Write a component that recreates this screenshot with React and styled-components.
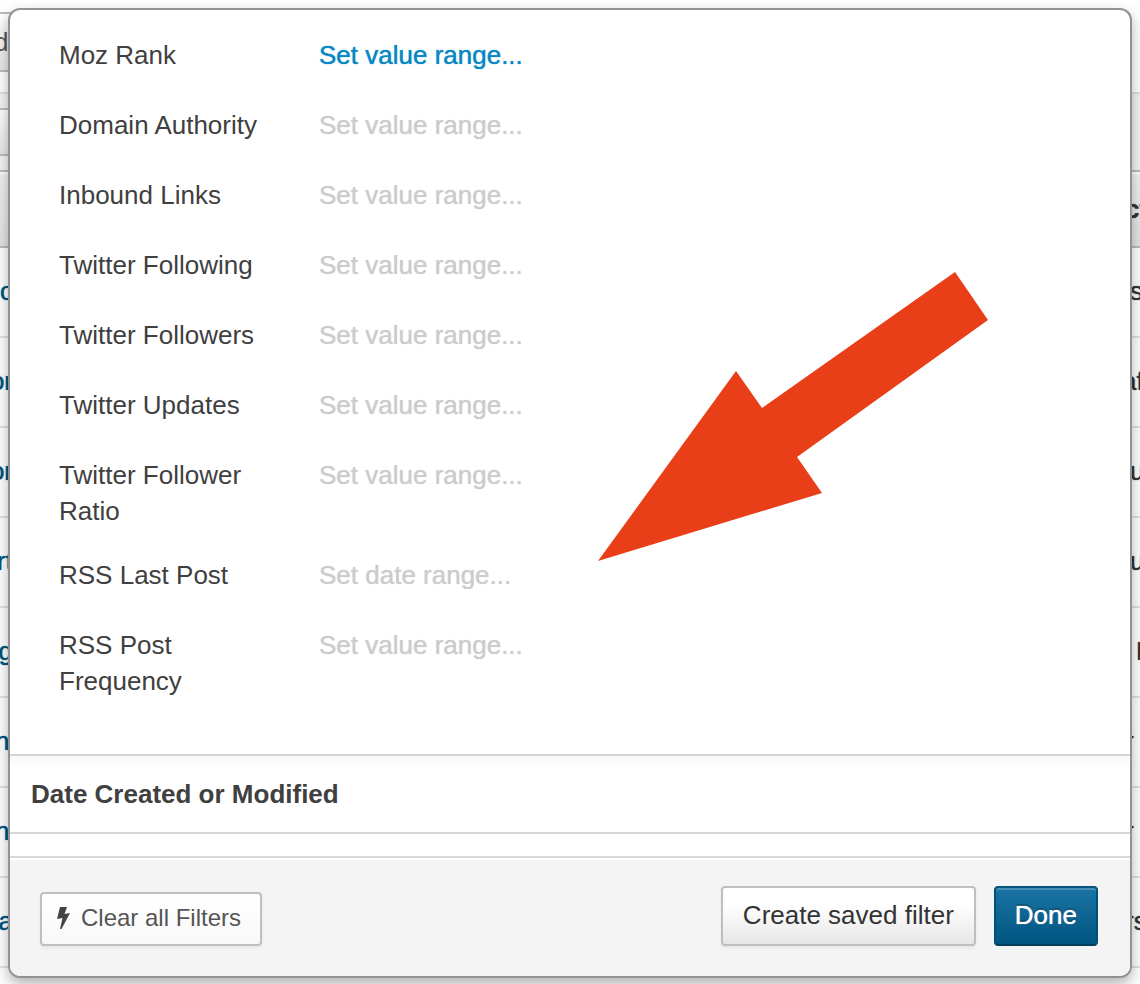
import React from "react";
import styled, { createGlobalStyle } from "styled-components";

const GlobalStyle = createGlobalStyle`
  *, *::before, *::after { box-sizing: border-box; }
  body {
    margin: 0;
    background: #fff;
    color: #404040;
    font: 26px/36px "Liberation Sans", Arial, sans-serif;
  }
`;

const Screen = styled.main`
  position: relative;
  display: flow-root;
  overflow: hidden;
`;

/* The contact list that stays visible around the dialog */
const Backdrop = styled.div`
  position: absolute;
  inset: 0;
  overflow: hidden;
`;

const TopBar = styled.div`
  height: 94px;
  padding-top: 12px;
  border-bottom: 2px solid #e0e0e0;
`;

const SubBar = styled.div`
  height: 76px;
  padding-top: 14px;
  background: #f3f3f3;
`;

const BarButton = styled.button`
  display: flex;
  align-items: center;
  justify-content: flex-end;
  width: 23px;
  height: ${(p) => (p.$tall ? 60 : 48)}px;
  padding: 0;
  border: solid #bbb;
  border-width: 2px 0;
  background: linear-gradient(#fff, #e6e6e6);
  color: #555;
  font: inherit;
`;

const ListTable = styled.table`
  width: 100%;
  table-layout: fixed;
  border-collapse: separate;
  border-spacing: 0;
`;

const HeadCell = styled.th`
  height: 78px;
  width: ${(p) => (p.$edge ? "18px" : "auto")};
  padding: 0;
  border: solid #bbb;
  border-width: 2px 0;
  background: linear-gradient(#f2f2f2, #e2e2e2);
  box-shadow: inset 0 2px #fff;
  color: #333;
  text-align: left;
`;

const Cell = styled.td`
  height: 90px;
  padding: 0 0 2px;
  border-bottom: 2px solid #e2e2e2;
  color: #333;
`;

const NameLink = styled.a`
  display: flex;
  justify-content: flex-end;
  width: ${(p) => (p.$long ? 24 : 13)}px;
  color: #005580;
  text-decoration: none;
  text-shadow: 0 0 1px currentColor;
`;

const Tail = styled.span`
  display: block;
  padding-left: ${(p) => p.$inset}px;
  text-shadow: 0 0 1px currentColor;
  white-space: nowrap;
`;

const Dialog = styled.section`
  position: relative;
  margin: 8px 8px 6px;
  border: 2px solid #929292;
  border-radius: 12px;
  background: #fff;
  background-clip: padding-box;
  box-shadow: 0 6px 14px rgba(0, 0, 0, 0.3);
`;

const FilterList = styled.dl`
  margin: 0;
  padding: 27px 49px;
`;

const FilterRow = styled.div`
  display: grid;
  grid-template-columns: 220px 1fr;
  column-gap: 40px;
  min-height: 70px;
  padding-bottom: 28px;
`;

const FilterName = styled.dt``;

const FilterValue = styled.dd`
  margin: 0;
`;

const RangeLink = styled.a`
  color: ${(p) => (p.$active ? "#0c87c4" : "#ccc")};
  text-decoration: none;
  text-shadow: 0 0 1px currentColor;
`;

const SectionTitle = styled.h2`
  margin: 0 0 22px;
  padding: 20px 21px;
  border: solid #d5d5d5;
  border-width: 2px 0;
  background: linear-gradient(#f8f8f8, #fff 14px);
  font-size: 26px;
  font-weight: bold;
  line-height: 36px;
`;

const Footer = styled.footer`
  display: flex;
  align-items: flex-end;
  gap: 18px;
  padding: 28px 32px 30px 30px;
  border-top: 2px solid #d8d8d8;
  border-radius: 0 0 10px 10px;
  background: #f4f4f4;
  box-shadow: inset 0 2px #fff;
`;

const Button = styled.button`
  height: 60px;
  padding: 0 20px 2px;
  border: 2px solid #bfbfbf;
  border-radius: 4px;
  background: linear-gradient(#fff 30%, #e6e6e6);
  box-shadow: 0 2px 3px rgba(0, 0, 0, 0.06);
  color: #333;
  font: inherit;
  white-space: nowrap;
`;

const ClearButton = styled(Button)`
  display: flex;
  align-items: center;
  gap: 10px;
  height: 54px;
  margin-right: auto;
  padding: 0 19px 2px 14px;
  background: linear-gradient(#fff, #f8f8f8);
  color: #555;
  font-size: 24px;
`;

const DoneButton = styled(Button)`
  padding: 0 19px 2px;
  border-color: #00547d #00507a #003f5e;
  background: linear-gradient(#1b74a5, #005580);
  box-shadow: inset 0 2px rgba(255, 255, 255, 0.2);
  color: #fff;
  text-shadow: 0 0 1px #fff, 0 -2px 1px rgba(0, 0, 0, 0.25);
`;

const Pointer = styled.svg`
  position: absolute;
  top: 261px;
  left: 587px;
`;

const filters = [
  { name: "Moz Rank", active: true },
  { name: "Domain Authority" },
  { name: "Inbound Links" },
  { name: "Twitter Following" },
  { name: "Twitter Followers" },
  { name: "Twitter Updates" },
  { name: "Twitter Follower Ratio" },
  { name: "RSS Last Post", kind: "date" },
  { name: "RSS Post Frequency" },
];

const contacts = [
  { name: "c", tail: "s", inset: 8 },
  { name: "or", tail: "af", inset: 0 },
  { name: "or", tail: "u", inset: 8 },
  { name: "rt", tail: "u", inset: 8 },
  { name: "g", tail: "E", inset: 14 },
  { name: "ne", long: true, tail: "r", inset: 3 },
  { name: "ne", long: true, tail: "r", inset: 3 },
  { name: "ca", tail: "rs", inset: 3 },
];

export default function App() {
  return (
    <Screen>
      <GlobalStyle />
      <Backdrop>
        <TopBar>
          <BarButton type="button" $tall>de</BarButton>
        </TopBar>
        <SubBar>
          <BarButton type="button" aria-label="Back">
            <svg width="15" height="10" viewBox="0 0 15 10" aria-hidden="true">
              <path d="M0 5 2 1h13v8H0z" fill="#333" />
            </svg>
          </BarButton>
        </SubBar>
        <ListTable>
          <thead>
            <tr>
              <HeadCell />
              <HeadCell $edge><Tail $inset={3}>ct</Tail></HeadCell>
            </tr>
          </thead>
          <tbody>
            {contacts.map((c, i) => (
              <tr key={i}>
                <Cell><NameLink href="#" $long={c.long}>{c.name}</NameLink></Cell>
                <Cell><Tail $inset={c.inset}>{c.tail}</Tail></Cell>
              </tr>
            ))}
          </tbody>
        </ListTable>
      </Backdrop>

      <Dialog role="dialog" aria-label="Filters">
        <FilterList>
          {filters.map((f) => (
            <FilterRow key={f.name}>
              <FilterName>{f.name}</FilterName>
              <FilterValue>
                <RangeLink href="#" $active={f.active}>
                  {`Set ${f.kind || "value"} range...`}
                </RangeLink>
              </FilterValue>
            </FilterRow>
          ))}
        </FilterList>
        <SectionTitle>Date Created or Modified</SectionTitle>
        <Footer>
          <ClearButton type="button">
            <svg width="15" height="24" viewBox="0 0 15 24" aria-hidden="true">
              <path d="M4 1h7L8.500 8 14 7 5.500 23H4L6.500 12 1 13z" fill="#444" />
            </svg>
            Clear all Filters
          </ClearButton>
          <Button type="button">Create saved filter</Button>
          <DoneButton type="button">Done</DoneButton>
        </Footer>
        <Pointer width="394" height="292" viewBox="597 271 394 292" aria-hidden="true">
          <path d="M598 561 736 371l26 37L955 272l33 48-191 137 25 36z" fill="#e93f18" />
        </Pointer>
      </Dialog>
    </Screen>
  );
}
